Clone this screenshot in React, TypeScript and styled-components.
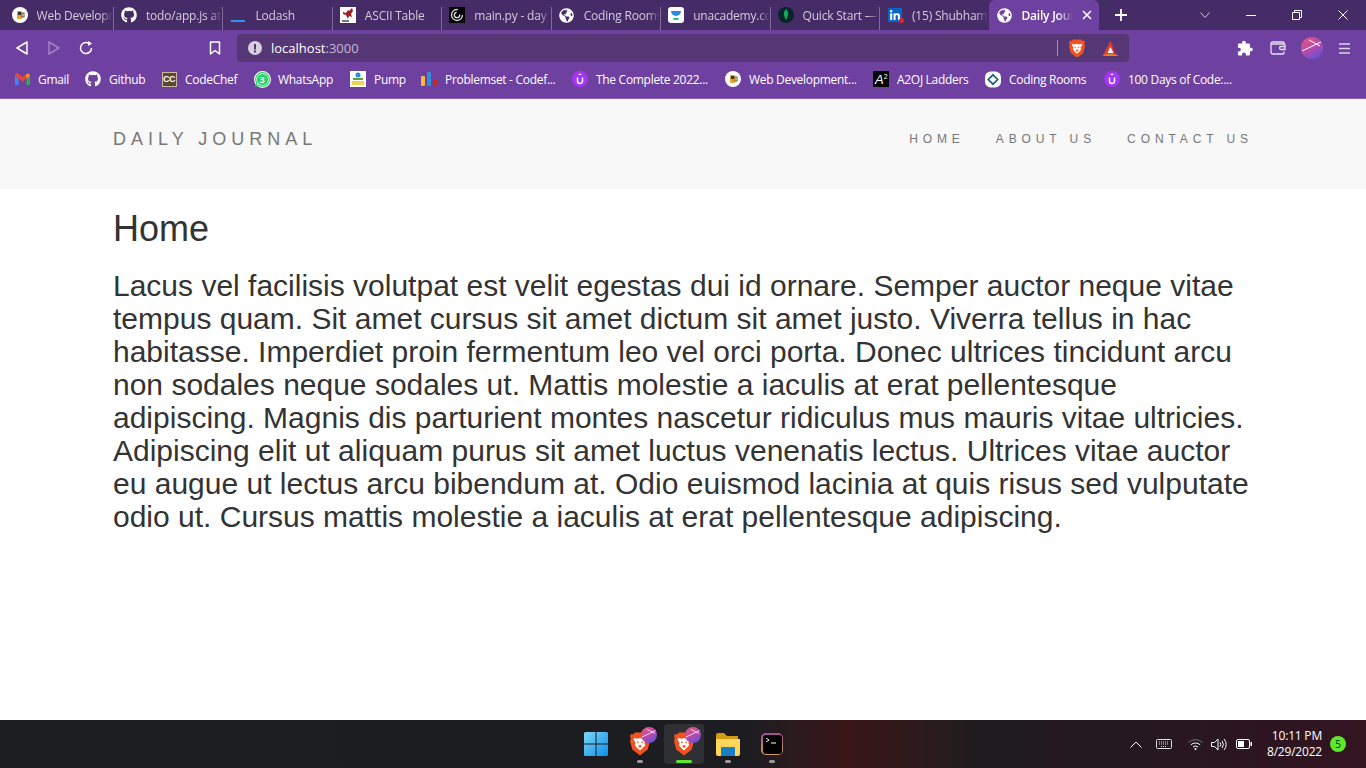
import React, { FunctionComponent, ReactNode } from 'react';
import styled, { createGlobalStyle } from 'styled-components';
import { FaGithub, FaGlobeAmericas, FaLinkedin, FaWhatsapp } from 'react-icons/fa';

const GlobalStyle = createGlobalStyle`
  html, body {
    margin: 0;
    padding: 0;
    height: 100%;
    overflow: hidden;
    background: #fff;
  }
  #root {
    height: 100%;
  }
  * {
    box-sizing: border-box;
  }
`;

const Page = styled.div`
  display: flex;
  flex-direction: column;
  height: 768px;
  overflow: hidden;
  font-family: 'Liberation Sans', Arial, sans-serif;
`;

const TabStrip = styled.div`
  display: flex;
  align-items: stretch;
  height: 30px;
  padding-left: 4.6px;
  background: #452c66;
  font-family: 'Open Sans', 'Noto Sans', sans-serif;
  font-size: 12px;
`;

const Tab = styled.div`
  display: flex;
  align-items: center;
  gap: 9px;
  width: 108.43px;
  padding-left: 7px;
  overflow: hidden;
  color: #d3cbde;
`;

const TabDivider = styled.div<{ $hidden?: boolean }>`
  align-self: flex-end;
  width: 1px;
  height: 23px;
  background: ${props => (props.$hidden ? 'transparent' : '#7f6a99')};
`;

const Favicon = styled.div`
  display: flex;
  align-items: center;
  justify-content: center;
  flex: none;
  width: 16px;
  height: 16px;
`;

const TabTitle = styled.span`
  flex: 1;
  min-width: 0;
  overflow: hidden;
  white-space: nowrap;
  letter-spacing: -0.2px;
  mask-image: linear-gradient(to right, #000 84%, transparent);
`;

const ActiveTab = styled.div`
  display: flex;
  align-items: center;
  gap: 9px;
  width: 110px;
  padding: 0 7px;
  border-radius: 6px 6px 0 0;
  background: #6e41a0;
  color: #fff;
  font-weight: 600;

  svg:last-child {
    flex: none;
  }
`;

const ActiveTitle = styled(TabTitle)`
  mask-image: linear-gradient(to right, #000 70%, transparent);
`;

const NewTab = styled.div`
  display: flex;
  align-items: center;
  margin-left: 16px;
`;

const WindowControls = styled.div`
  display: flex;
  margin-left: auto;
`;

const WindowButton = styled.div`
  display: flex;
  align-items: center;
  justify-content: center;
  width: 46px;
`;

const Toolbar = styled.div`
  display: flex;
  align-items: center;
  height: 32px;
  padding: 4px 0 0 16px;
  background: #6e41a0;
`;

const NavButtons = styled.div`
  display: flex;
  align-items: center;
  gap: 19.5px;
`;

const BookmarkButton = styled.div`
  display: flex;
  margin: 0 16px 0 116px;
`;

const AddressBar = styled.div`
  display: flex;
  align-items: center;
  width: 892px;
  height: 28px;
  padding: 0 10px 0 11px;
  border-radius: 4px;
  background: #553775;
`;

const Url = styled.span`
  flex: 1;
  margin-left: 9px;
  color: #fff;
  font-family: 'Open Sans', 'Noto Sans', sans-serif;
  font-size: 13px;
`;

const UrlPort = styled.span`
  color: #c4b6d4;
`;

const ShieldDivider = styled.div`
  width: 1px;
  height: 16px;
  margin-right: 11px;
  background: #a594ba;
`;

const ShieldIcons = styled.div`
  display: flex;
  align-items: center;
  gap: 17px;
`;

const ToolbarRight = styled.div`
  display: flex;
  align-items: center;
  gap: 15px;
  margin-left: 106px;
`;

const BookmarksBar = styled.div`
  display: flex;
  align-items: center;
  gap: 16px;
  height: 37px;
  padding: 0 0 2px 14px;
  border-bottom: 1px solid #8a63b5;
  background: #6e41a0;
  color: #fff;
  font-family: 'Open Sans', 'Noto Sans', sans-serif;
  font-size: 12px;
`;

const Bookmark = styled.div`
  display: flex;
  align-items: center;
  gap: 8px;
`;

const BookmarkIcon = styled.div`
  display: flex;
  align-items: center;
  justify-content: center;
  width: 16px;
  height: 17px;
`;

const BookmarkLabel = styled.span<{ $width: number }>`
  width: ${props => props.$width}px;
  letter-spacing: -0.3px;
  white-space: nowrap;
`;

const LinkedinBox = styled.div`
  position: relative;
  width: 16px;
  height: 16px;
  background: linear-gradient(#fff, #fff) center / 12px 12px no-repeat;
`;

const RedDot = styled.div`
  position: absolute;
  right: -1px;
  bottom: 0;
  width: 5px;
  height: 5px;
  border-radius: 50%;
  background: #e0242c;
`;

const CodeChefBadge = styled.span`
  display: flex;
  align-items: center;
  justify-content: center;
  width: 15px;
  height: 15px;
  border: 1px solid #cbb9a4;
  background: #5d4632;
  color: #fff;
  font-family: 'Liberation Sans', sans-serif;
  font-size: 9px;
  font-weight: 700;
  letter-spacing: -0.5px;
`;

const WhatsappBox = styled.div`
  position: relative;
  display: flex;
  width: 17px;
  height: 17px;
  border-radius: 50%;
  background: #fff;
`;

const WhatsappCount = styled.span`
  position: absolute;
  inset: 3px;
  display: flex;
  align-items: center;
  justify-content: center;
  border-radius: 50%;
  background: #25d366;
  color: #fff;
  font-size: 9px;
  font-weight: 700;
`;

const A2Badge = styled.span`
  display: block;
  width: 16px;
  height: 16px;
  padding-left: 2px;
  background: #000;
  color: #fff;
  font-family: 'Liberation Sans', sans-serif;
  font-size: 13px;
  font-style: italic;
  line-height: 18px;

  sup {
    font-size: 7px;
    font-style: normal;
    line-height: 0;
    vertical-align: 5px;
  }
`;

const Navbar = styled.header`
  display: flex;
  justify-content: space-between;
  flex: none;
  height: 90px;
  padding: 0 113px;
  background: #f8f8f8;
`;

const Brand = styled.div`
  margin-top: 29px;
  color: #777;
  font-size: 18px;
  line-height: 22px;
  letter-spacing: 5px;
`;

const NavLinks = styled.nav`
  display: flex;
  gap: 31px;
  margin-top: 33px;
`;

const NavLink = styled.span`
  color: #777;
  font-size: 12px;
  line-height: 15px;
  letter-spacing: 4.9px;
`;

const Main = styled.main`
  flex: 1;
  padding: 20px 113px 0;
  background: #fff;
  color: #333;
`;

const Heading = styled.h1`
  margin: 0 0 20px;
  font-size: 36px;
  font-weight: 400;
  line-height: 1.1;
`;

const Body = styled.p`
  margin: 0;
  font-size: 30px;
  line-height: 1.1;
`;

const Taskbar = styled.footer`
  display: flex;
  align-items: center;
  flex: none;
  height: 48px;
  padding-left: 576px;
  background: linear-gradient(90deg, #1c1e20 0%, #1d1d21 55%, #3a1618 62%, #1f1c1f 72%, #2a1621 90%, #33141f 100%);
`;

const TaskbarApps = styled.div`
  display: flex;
  gap: 4px;
`;

const TaskApp = styled.div<{ $active?: boolean }>`
  position: relative;
  display: flex;
  align-items: center;
  justify-content: center;
  width: 40px;
  height: 40px;
  border-radius: 4px;
  background: ${props => (props.$active ? '#2f3033' : 'transparent')};
`;

const AvatarBadge = styled.div`
  position: absolute;
  top: 3px;
  right: 3px;
  display: flex;
`;

const RunningDot = styled.div<{ $active?: boolean }>`
  position: absolute;
  bottom: 1px;
  left: 50%;
  width: ${props => (props.$active ? 16 : 6)}px;
  height: 3px;
  border-radius: 2px;
  transform: translateX(-50%);
  background: ${props => (props.$active ? '#5ee82a' : '#9a9a9a')};
`;

const TerminalFrame = styled.div`
  display: flex;
  width: 22px;
  height: 22px;
  padding: 1.5px;
  border-radius: 5px;
  background: linear-gradient(#a24a9c, #d99a50);
`;

const TerminalScreen = styled.div`
  flex: 1;
  padding: 3px 0 0 3px;
  border-radius: 3px;
  background: #000;

  svg {
    display: block;
  }
`;

const Tray = styled.div`
  display: flex;
  align-items: center;
  gap: 14px;
  margin-left: auto;
  padding-right: 20px;
  color: #fff;
`;

const TrayIcons = styled.div`
  display: flex;
  align-items: center;
  gap: 8.5px;
  margin-left: 2px;
`;

const Clock = styled.div`
  display: flex;
  flex-direction: column;
  align-items: flex-end;
  gap: 2px;
  margin-left: 1px;
  font-family: 'Open Sans', 'Noto Sans', sans-serif;
  font-size: 12px;
  line-height: 14px;
  letter-spacing: -0.2px;
`;

const NotificationBadge = styled.div`
  display: flex;
  align-items: center;
  justify-content: center;
  width: 16px;
  height: 16px;
  margin-left: -6px;
  border-radius: 50%;
  background: #5ee82a;
  color: #123;
  font-family: 'Open Sans', sans-serif;
  font-size: 10px;
`;

const BraveIcon: FunctionComponent<{ size: number }> = ({ size }) => (
  <svg width={size} height={size * 1.18} viewBox="0 0 20 23.6">
    <path d="M5 .5h10l2 2 2-.5 1 2-.8 2.500.8 2.500-2.300 8.500L10 23.600l-7.700-6.100L0 9l.8-2.500L0 4l1-2 2 .5z" fill="#f4511e" />
    <path d="M4.500 6l3 .8L10 6l2.500.8 3-.8 1 1.500-2.200 3.500.9 2.200-3 3.300L10 18.500 7.800 16.500l-3-3.300.9-2.200L3.500 7.500z" fill="#fff" />
    <path d="M7 9l2 1.500-1.500 1zM13 9l-2 1.500 1.500 1zM8 14l2-1 2 1-2 2z" fill="#f4511e" />
  </svg>
);

const BatIcon = () => (
  <svg width="17" height="15" viewBox="0 0 16 15">
    <path d="M8 0l8 15H0z" fill="#e0402f" />
    <path d="M8 0l8 15-4-2z" fill="#8c2a6a" />
    <path d="M0 15l4-2h8l4 2z" fill="#f47a20" />
    <path d="M8 6l3 6H5z" fill="#fff" />
  </svg>
);

const AvatarIcon: FunctionComponent<{ size: number; id: string }> = ({ size, id }) => (
  <svg width={size} height={size} viewBox="0 0 22 22">
    <defs>
      <linearGradient id={id} x1="0.2" y1="0" x2="0.8" y2="1">
        <stop offset="0" stopColor="#e8557f" />
        <stop offset="0.55" stopColor="#b04ab0" />
        <stop offset="1" stopColor="#5a55d8" />
      </linearGradient>
    </defs>
    <circle cx="11" cy="11" r="11" fill={`url(#${id})`} />
    <path d="M1 14L20 5M8 3l11 6" stroke="#fff" strokeWidth="1" fill="none" />
  </svg>
);

const UdemyIcon = () => (
  <svg width="16" height="16" viewBox="0 0 16 16">
    <circle cx="8" cy="8" r="8" fill="#a435f0" />
    <path d="M5.500 6.500v3.500a2.500 2.500 0 0 0 5 0V6.500" stroke="#fff" strokeWidth="1.500" fill="none" />
    <path d="M8 2.500l2 1.500H6z" fill="#fff" />
  </svg>
);

const BeerIcon = () => (
  <svg width="16" height="16" viewBox="0 0 16 16">
    <circle cx="8" cy="8" r="8" fill="#fff" />
    <rect x="5" y="4" width="5" height="8" rx="1" fill="#e4a52c" />
    <rect x="10" y="6" width="2" height="4" fill="none" stroke="#6a5a30" strokeWidth="1" />
    <rect x="6" y="5" width="3" height="3" fill="#3d3422" />
  </svg>
);

const CodingRoomsIcon = () => (
  <svg width="17" height="17" viewBox="0 0 17 17">
    <rect width="17" height="17" rx="6" fill="#fff" />
    <path d="M8.500 3.500l5 5-5 5-5-5z" fill="none" stroke="#1d5c7c" strokeWidth="1.800" />
  </svg>
);

const GmailIcon = () => (
  <svg width="15" height="12" viewBox="0 0 15 12">
    <path d="M0 2v9a1 1 0 0 0 1 1h2.500V5.500z" fill="#4285f4" />
    <path d="M15 2v9a1 1 0 0 1-1 1h-2.500V5.500z" fill="#34a853" />
    <path d="M0 2c0-2 2-2.500 3-1.500l4.500 3.500L12 .5c1-1 3-.5 3 1.500l-3.500 3.500-4 3-4-3z" fill="#ea4335" />
    <path d="M11.500 1.100L15 2l-3.500 3.500z" fill="#fbbc04" />
  </svg>
);

const AsciiIcon = () => (
  <svg width="16" height="16" viewBox="0 0 16 16">
    <rect width="16" height="16" fill="#fff" />
    <path d="M3 5l3 1 2-3 1 1 3-3 1 3-2 3 1 3-3-1-1 3-2-4-3-1z" fill="#a01c28" />
    <path d="M2 13h7v2H2z" fill="#777" />
  </svg>
);

const SpiralIcon = () => (
  <svg width="16" height="16" viewBox="0 0 16 16">
    <rect width="16" height="16" fill="#000" />
    <circle cx="8" cy="8" r="5.500" fill="none" stroke="#ddd" strokeWidth="1.300" strokeDasharray="26 8" />
    <circle cx="8" cy="8" r="2.700" fill="none" stroke="#ddd" strokeWidth="1.300" strokeDasharray="12 4" />
  </svg>
);

const UnacademyIcon = () => (
  <svg width="16" height="16" viewBox="0 0 16 16">
    <rect width="16" height="16" rx="3" fill="#fff" />
    <path d="M3 4h10a5 5 0 0 1-10 0z" fill="#2f87e8" />
    <path d="M5.500 11h5v2h-5z" fill="#27c08a" />
  </svg>
);

const MongoIcon = () => (
  <svg width="16" height="16" viewBox="0 0 16 16">
    <circle cx="8" cy="8" r="8" fill="#05242b" />
    <path d="M8 2c2.500 2.500 3 6 0 11-3-5-2.500-8.500 0-11z" fill="#13aa52" />
  </svg>
);

const LodashIcon = () => (
  <svg width="16" height="16" viewBox="0 0 16 16">
    <rect x="1" y="13" width="14" height="2" fill="#3492e9" />
  </svg>
);

const PumpIcon = () => (
  <svg width="16" height="16" viewBox="0 0 16 16">
    <rect width="16" height="16" fill="#fff" />
    <circle cx="8" cy="4" r="2.500" fill="#2b8dd0" />
    <rect x="3" y="7" width="10" height="2" fill="#5b9e3e" />
    <rect x="2" y="10" width="12" height="4" fill="#e9d84a" />
  </svg>
);

const BarsIcon = () => (
  <svg width="16" height="16" viewBox="0 0 16 16">
    <rect x="0" y="5" width="4" height="10" rx="1" fill="#f5b942" />
    <rect x="6" y="1" width="4" height="14" rx="1" fill="#2f8fd8" />
    <rect x="12" y="8" width="4" height="7" rx="1" fill="#c62828" />
  </svg>
);

const tabs: { title: string; icon: ReactNode }[] = [
  { title: 'Web Development', icon: <BeerIcon /> },
  { title: 'todo/app.js at main', icon: <FaGithub size={16} color="#fff" /> },
  { title: 'Lodash', icon: <LodashIcon /> },
  { title: 'ASCII Table', icon: <AsciiIcon /> },
  { title: 'main.py - day', icon: <SpiralIcon /> },
  { title: 'Coding Rooms', icon: <FaGlobeAmericas size={15} color="#fff" /> },
  { title: 'unacademy.com', icon: <UnacademyIcon /> },
  { title: 'Quick Start — Mongo', icon: <MongoIcon /> },
  {
    title: '(15) Shubham',
    icon: (
      <LinkedinBox>
        <FaLinkedin size={16} color="#0a66c2" />
        <RedDot />
      </LinkedinBox>
    )
  }
];

const bookmarks: { label: string; width: number; icon: ReactNode }[] = [
  { label: 'Gmail', width: 31, icon: <GmailIcon /> },
  { label: 'Github', width: 36, icon: <FaGithub size={16} color="#fff" /> },
  { label: 'CodeChef', width: 53, icon: <CodeChefBadge>CC</CodeChefBadge> },
  {
    label: 'WhatsApp',
    width: 56,
    icon: (
      <WhatsappBox>
        <FaWhatsapp size={17} color="#25d366" />
        <WhatsappCount>3</WhatsappCount>
      </WhatsappBox>
    )
  },
  { label: 'Pump', width: 31, icon: <PumpIcon /> },
  { label: 'Problemset - Codef...', width: 111, icon: <BarsIcon /> },
  { label: 'The Complete 2022...', width: 113, icon: <UdemyIcon /> },
  { label: 'Web Development...', width: 108, icon: <BeerIcon /> },
  { label: 'A2OJ Ladders', width: 72, icon: <A2Badge>A<sup>2</sup></A2Badge> },
  { label: 'Coding Rooms', width: 79, icon: <CodingRoomsIcon /> },
  { label: '100 Days of Code:...', width: 105, icon: <UdemyIcon /> }
];

const App: FunctionComponent = () => (
  <Page>
    <GlobalStyle />
    <TabStrip>
      {tabs.map((tab, i) => (
        <React.Fragment key={tab.title}>
          <Tab>
            <Favicon>{tab.icon}</Favicon>
            <TabTitle>{tab.title}</TabTitle>
          </Tab>
          <TabDivider $hidden={i === tabs.length - 1} />
        </React.Fragment>
      ))}
      <ActiveTab>
        <Favicon>
          <FaGlobeAmericas size={15} color="#fff" />
        </Favicon>
        <ActiveTitle>Daily Journal</ActiveTitle>
        <svg width="10" height="10" viewBox="0 0 10 10">
          <path d="M1 1l8 8M9 1l-8 8" stroke="#fff" strokeWidth="1.600" />
        </svg>
      </ActiveTab>
      <NewTab>
        <svg width="12" height="12" viewBox="0 0 12 12">
          <path d="M6 0v12M0 6h12" stroke="#fff" strokeWidth="1.800" />
        </svg>
      </NewTab>
      <WindowControls>
        <WindowButton>
          <svg width="10" height="6" viewBox="0 0 10 6">
            <path d="M.5.500L5 5.500 9.500.500" stroke="#cfc6dc" fill="none" />
          </svg>
        </WindowButton>
        <WindowButton>
          <svg width="10" height="10" viewBox="0 0 10 10">
            <path d="M0 5.500h10" stroke="#fff" />
          </svg>
        </WindowButton>
        <WindowButton>
          <svg width="10" height="10" viewBox="0 0 10 10">
            <path d="M.5 2.500h7v7h-7zM2.500 2.500v-2h7v7h-2" stroke="#fff" fill="none" />
          </svg>
        </WindowButton>
        <WindowButton>
          <svg width="10" height="10" viewBox="0 0 10 10">
            <path d="M.5.500l9 9M9.500.500l-9 9" stroke="#fff" />
          </svg>
        </WindowButton>
      </WindowControls>
    </TabStrip>

    <Toolbar>
      <NavButtons>
        <svg width="12" height="14" viewBox="0 0 12 14">
          <path d="M11 1v12L1 7z" stroke="#fff" strokeWidth="1.500" fill="none" strokeLinejoin="round" />
        </svg>
        <svg width="12" height="14" viewBox="0 0 12 14">
          <path d="M1 1v12l10-6z" stroke="#a283c4" strokeWidth="1.500" fill="none" strokeLinejoin="round" />
        </svg>
        <svg width="14" height="14" viewBox="0 0 14 14">
          <path d="M12.500 7A5.500 5.500 0 1 1 9.500 2.100" stroke="#fff" strokeWidth="1.500" fill="none" />
          <path d="M9 0l4 2.500L9 5z" fill="#fff" />
        </svg>
      </NavButtons>
      <BookmarkButton>
        <svg width="12" height="14" viewBox="0 0 12 14">
          <path d="M1.500 1h9v12L6 9.500 1.500 13z" stroke="#fff" strokeWidth="1.500" fill="none" strokeLinejoin="round" />
        </svg>
      </BookmarkButton>
      <AddressBar>
        <svg width="14" height="14" viewBox="0 0 14 14">
          <circle cx="7" cy="7" r="7" fill="#d8d0e2" />
          <rect x="6" y="3" width="2" height="5.500" fill="#553775" />
          <rect x="6" y="9.500" width="2" height="2" fill="#553775" />
        </svg>
        <Url>
          localhost<UrlPort>:3000</UrlPort>
        </Url>
        <ShieldDivider />
        <ShieldIcons>
          <BraveIcon size={16} />
          <BatIcon />
        </ShieldIcons>
      </AddressBar>
      <ToolbarRight>
        <svg width="20" height="17" viewBox="0 0 24 24" preserveAspectRatio="xMidYMid meet">
          <path
            d="M20.500 11H19V7c0-1.100-.9-2-2-2h-4V3.500C13 2.120 11.880 1 10.500 1S8 2.120 8 3.500V5H4c-1.100 0-1.990.9-1.990 2v3.800H3.500c1.490 0 2.700 1.210 2.700 2.700s-1.210 2.700-2.700 2.700H2V20c0 1.100.9 2 2 2h3.800v-1.500c0-1.490 1.210-2.700 2.700-2.700 1.490 0 2.700 1.210 2.700 2.700V22H17c1.100 0 2-.9 2-2v-4h1.500c1.380 0 2.500-1.120 2.500-2.500S21.880 11 20.500 11z"
            fill="#fff"
          />
        </svg>
        <svg width="16" height="14" viewBox="0 0 16 14">
          <path d="M14 3V2a1 1 0 0 0-1-1H2.500a1.500 1.500 0 0 0-1.500 1.500V11a2 2 0 0 0 2 2h10a1 1 0 0 0 1-1v-1.500" stroke="#e8e0f0" strokeWidth="1.300" fill="none" />
          <path d="M1 3h13a1 1 0 0 1 1 1v1.500M15 5.500h-4a1.500 1.500 0 0 0 0 3h4z" stroke="#e8e0f0" strokeWidth="1.300" fill="none" />
        </svg>
        <AvatarIcon size={22} id="avatarToolbar" />
        <svg width="13" height="11" viewBox="0 0 13 11">
          <path d="M1 1h11M1 5.500h11M1 10h11" stroke="#ddd2ea" strokeWidth="1.500" />
        </svg>
      </ToolbarRight>
    </Toolbar>

    <BookmarksBar>
      {bookmarks.map(item => (
        <Bookmark key={item.label}>
          <BookmarkIcon>{item.icon}</BookmarkIcon>
          <BookmarkLabel $width={item.width}>{item.label}</BookmarkLabel>
        </Bookmark>
      ))}
    </BookmarksBar>

    <Navbar>
      <Brand>DAILY JOURNAL</Brand>
      <NavLinks>
        <NavLink>HOME</NavLink>
        <NavLink>ABOUT US</NavLink>
        <NavLink>CONTACT US</NavLink>
      </NavLinks>
    </Navbar>

    <Main>
      <Heading>Home</Heading>
      <Body>
        Lacus vel facilisis volutpat est velit egestas dui id ornare. Semper auctor neque vitae tempus quam. Sit amet
        cursus sit amet dictum sit amet justo. Viverra tellus in hac habitasse. Imperdiet proin fermentum leo vel orci
        porta. Donec ultrices tincidunt arcu non sodales neque sodales ut. Mattis molestie a iaculis at erat
        pellentesque adipiscing. Magnis dis parturient montes nascetur ridiculus mus mauris vitae ultricies. Adipiscing
        elit ut aliquam purus sit amet luctus venenatis lectus. Ultrices vitae auctor eu augue ut lectus arcu bibendum
        at. Odio euismod lacinia at quis risus sed vulputate odio ut. Cursus mattis molestie a iaculis at erat
        pellentesque adipiscing.
      </Body>
    </Main>

    <Taskbar>
      <TaskbarApps>
        <TaskApp>
          <svg width="24" height="24" viewBox="0 0 24 24">
            <defs>
              <linearGradient id="win" x1="0" y1="0" x2="1" y2="1">
                <stop offset="0" stopColor="#7fd6f7" />
                <stop offset="1" stopColor="#0a8fe8" />
              </linearGradient>
            </defs>
            <path d="M0 1.500A1.500 1.500 0 0 1 1.500 0h10v11.500H0zM12.500 0h10A1.500 1.500 0 0 1 24 1.500v10H12.500zM0 12.500h11.500V24h-10A1.500 1.500 0 0 1 0 22.500zM12.500 12.500H24v10a1.500 1.500 0 0 1-1.500 1.500h-10z" fill="url(#win)" />
          </svg>
        </TaskApp>
        <TaskApp>
          <BraveIcon size={20} />
          <AvatarBadge>
            <AvatarIcon size={16} id="avatarTaskA" />
          </AvatarBadge>
          <RunningDot />
        </TaskApp>
        <TaskApp $active>
          <BraveIcon size={20} />
          <AvatarBadge>
            <AvatarIcon size={16} id="avatarTaskB" />
          </AvatarBadge>
          <RunningDot $active />
        </TaskApp>
        <TaskApp>
          <svg width="24" height="23" viewBox="0 0 24 23">
            <path d="M0 2a2 2 0 0 1 2-2h6l3 3h11v5H0z" fill="#d19c14" />
            <path d="M0 6h24v15a2 2 0 0 1-2 2H2a2 2 0 0 1-2-2z" fill="#fdd65a" />
            <path d="M5 15a1 1 0 0 1 1-1h12a1 1 0 0 1 1 1v8H5z" fill="#1b7fc4" />
          </svg>
          <RunningDot />
        </TaskApp>
        <TaskApp>
          <TerminalFrame>
            <TerminalScreen>
              <svg width="11" height="8" viewBox="0 0 11 8">
                <path d="M0 0l3 2-3 2M5 5h5" stroke="#fff" fill="none" />
              </svg>
            </TerminalScreen>
          </TerminalFrame>
          <RunningDot />
        </TaskApp>
      </TaskbarApps>
      <Tray>
        <svg width="12" height="7" viewBox="0 0 12 7">
          <path d="M.5 6.500L6 1l5.500 5.500" stroke="#fff" fill="none" />
        </svg>
        <svg width="16" height="10" viewBox="0 0 16 10">
          <rect x=".5" y=".5" width="15" height="9" rx="1" stroke="#ddd" fill="none" />
          <path d="M3 3h10M3 5h10M5 7.500h6" stroke="#ddd" strokeDasharray="1 1" />
        </svg>
        <TrayIcons>
          <svg width="15" height="11" viewBox="0 0 15 11">
            <path d="M.5 3.500a10 10 0 0 1 14 0" stroke="#777" fill="none" />
            <path d="M2.800 5.800a7 7 0 0 1 9.400 0M5 8a3.800 3.800 0 0 1 5 0" stroke="#fff" fill="none" />
            <circle cx="7.500" cy="10" r="1" fill="#fff" />
          </svg>
          <svg width="16" height="13" viewBox="0 0 16 13">
            <path d="M.5 4.500h3L7 1v11L3.500 8.500h-3z" stroke="#fff" fill="none" />
            <path d="M9 4.500a3 3 0 0 1 0 4M11 3a5.500 5.500 0 0 1 0 7M13 1a8 8 0 0 1 0 11" stroke="#fff" fill="none" />
          </svg>
          <svg width="16" height="10" viewBox="0 0 16 10">
            <rect x=".5" y=".5" width="13" height="9" rx="1.500" stroke="#fff" fill="none" />
            <rect x="2" y="2" width="6" height="6" fill="#fff" />
            <rect x="14.500" y="3" width="1.500" height="4" fill="#fff" />
          </svg>
        </TrayIcons>
        <Clock>
          <span>10:11 PM</span>
          <span>8/29/2022</span>
        </Clock>
        <NotificationBadge>5</NotificationBadge>
      </Tray>
    </Taskbar>
  </Page>
);

export default App;
